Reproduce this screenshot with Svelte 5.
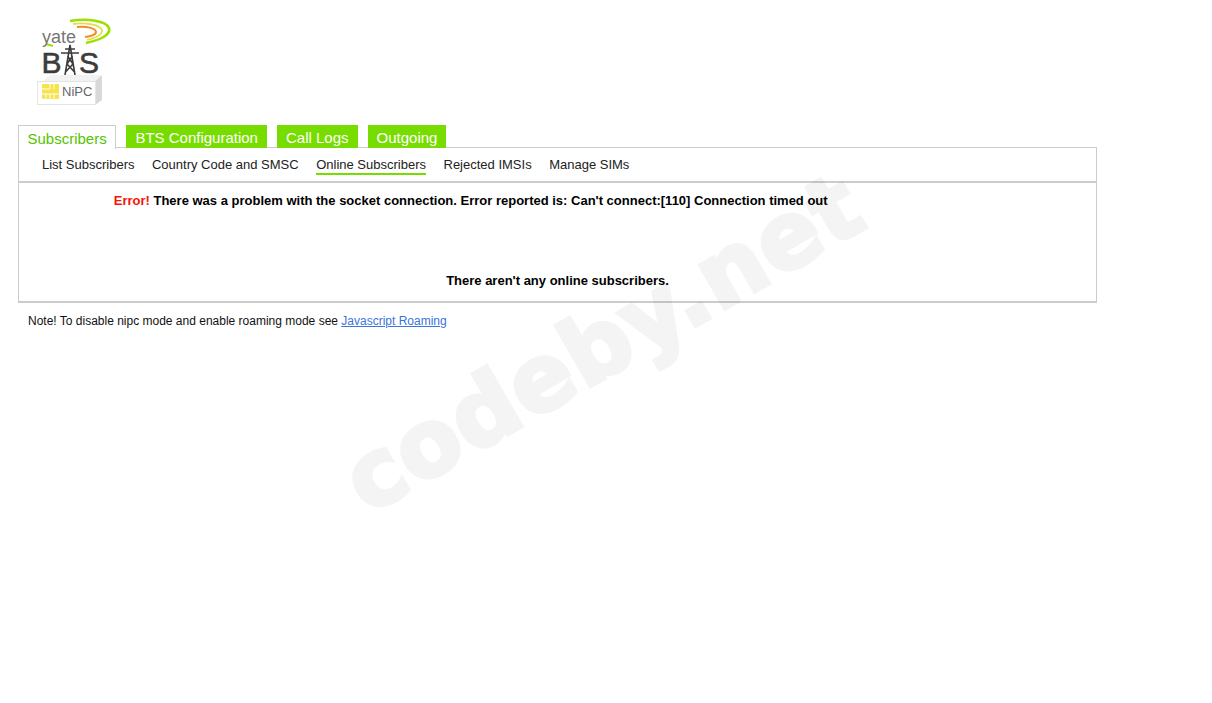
<script>
  const tabs = ['Subscribers', 'BTS Configuration', 'Call Logs', 'Outgoing'];
  const links = ['List Subscribers', 'Country Code and SMSC', 'Online Subscribers', 'Rejected IMSIs', 'Manage SIMs'];
</script>

<div class="page">
  <header class="logo">
    <svg width="110" height="105" viewBox="0 0 110 105" aria-label="yate BTS NiPC">
      <path d="M50 11 C68 8 86 11 89 18 C91 25 80 30 66 33" fill="none" stroke="#9be000" stroke-width="2.600" />
      <path d="M53 14 C66 12 80 15 82 20 C83 25 75 28 67 30" fill="none" stroke="#dfe04a" stroke-width="1.800" />
      <path d="M57 17 C66 16 76 18 76 22 C76 25 71 26 65 27" fill="none" stroke="#f58a2a" stroke-width="2" />
      <path d="M26 34 l7 2" stroke="#9be000" stroke-width="2" />
      <text x="22" y="33" class="yate">yate</text>
      <text x="21.500" y="63" class="bts">B</text>
      <text x="59" y="63" class="bts">S</text>
      <path d="M41 43 h18 M45 39 h10 M50 35 L45 65 M50 35 L55 65 M47.500 46 L53 54 M52.500 46 L47 54 M47 54 L54.500 62 M53 54 L45.500 62" fill="none" stroke="#3c3c3c" stroke-width="1.600" />
      <path d="M75 71 L82 65 L82 90 L75 95 Z" fill="#d8d8d8" />
      <path d="M23 71 L30 65 L82 65 L75 71 Z" fill="#f2f2f2" />
      <rect x="17.500" y="71.500" width="58" height="23" fill="#fff" stroke="#e4e4e4" />
      <rect x="22" y="74" width="17" height="15" rx="1" fill="#f7e34a" />
      <path d="M22 79 h8 M22 84 h17 M30 74 v5 M34 74 v5 M26 84 v5 M30 84 v5 M34 84 v5" stroke="#fff" stroke-width="1" />
      <text x="42" y="86" class="nipc">NiPC</text>
    </svg>
  </header>

  <nav class="tabs">
    {#each tabs as tab, i}
      <a href="#top" class="tab" class:active={i === 0}>{tab}</a>
    {/each}
  </nav>

  <div class="subnav">
    {#each links as link, i}
      <a href="#top" class:current={i === 2}>{link}</a>
    {/each}
  </div>

  <main class="content">
    <p class="error"><span>Error!</span> There was a problem with the socket connection. Error reported is: Can't connect:[110] Connection timed out</p>
    <p class="empty">There aren't any online subscribers.</p>
  </main>

  <p class="note">Note! To disable nipc mode and enable roaming mode see <a href="#top">Javascript Roaming</a></p>

  <div class="watermark" aria-hidden="true">codeby.net</div>
</div>

<style>
  :global(body) {
    margin: 0;
    background: #fff;
  }
  .page {
    position: relative;
    height: 703px;
    overflow: hidden;
    padding-left: 18px;
    font-family: "Liberation Sans", Arial, sans-serif;
    font-size: 13px;
    color: #000;
  }
  .logo {
    height: 125px;
    padding-left: 2px;
    box-sizing: border-box;
    padding-top: 10px;
  }
  .logo svg {
    display: block;
  }
  .yate {
    font-family: "Liberation Sans", sans-serif;
    font-size: 18px;
    fill: #777;
  }
  .bts {
    font-family: "Liberation Sans", sans-serif;
    font-size: 30px;
    fill: #3c3c3c;
    stroke: #3c3c3c;
    stroke-width: 0.6px;
  }
  .nipc {
    font-family: "Liberation Sans", sans-serif;
    font-size: 13px;
    fill: #666;
  }
  .tabs {
    display: flex;
    gap: 10px;
    width: 1079px;
    height: 23px;
    margin-bottom: -1px;
    position: relative;
    z-index: 1;
  }
  .tab {
    height: 23px;
    padding: 0 9px;
    box-sizing: border-box;
    background: #77dd00;
    color: #fff;
    font-size: 15px;
    line-height: 26px;
    text-decoration: none;
  }
  .tab.active {
    height: 24px;
    padding: 0 8.700px 0 8.500px;
    background: #fff;
    color: #55c400;
    border: 1px solid #ccc;
    border-bottom: 0;
  }
  .subnav {
    display: flex;
    gap: 17.500px;
    width: 1079px;
    height: 36px;
    box-sizing: border-box;
    padding: 8px 0 0 23px;
    border: 1px solid #ccc;
    border-bottom-width: 2px;
  }
  .subnav a {
    height: 17px;
    color: #222;
    line-height: 17px;
    text-decoration: none;
  }
  .subnav a.current {
    border-bottom: 2px solid #77dd00;
  }
  .content {
    width: 1079px;
    height: 120px;
    box-sizing: border-box;
    border: 1px solid #ccc;
    border-top: 0;
    border-bottom-width: 2px;
    font-weight: bold;
  }
  .content p {
    margin: 0;
    line-height: 16px;
  }
  .error {
    padding: 10px 0 0 94.750px;
  }
  .error span {
    color: #f5140a;
  }
  .empty {
    padding-top: 64px;
    text-align: center;
  }
  .note {
    margin: 0;
    padding: 10px 0 0 10px;
    font-size: 12px;
    line-height: 16px;
    color: #111;
  }
  .note a {
    color: #3a74dc;
  }
  .watermark {
    position: absolute;
    left: 603px;
    top: 343px;
    transform: translate(-50%, -50%) rotate(-30deg);
    font-family: "DejaVu Sans", sans-serif;
    font-weight: bold;
    font-size: 92px;
    -webkit-text-stroke: 4px #000;
    letter-spacing: 1px;
    color: #000;
    opacity: 0.04;
    white-space: nowrap;
    pointer-events: none;
  }
</style>
